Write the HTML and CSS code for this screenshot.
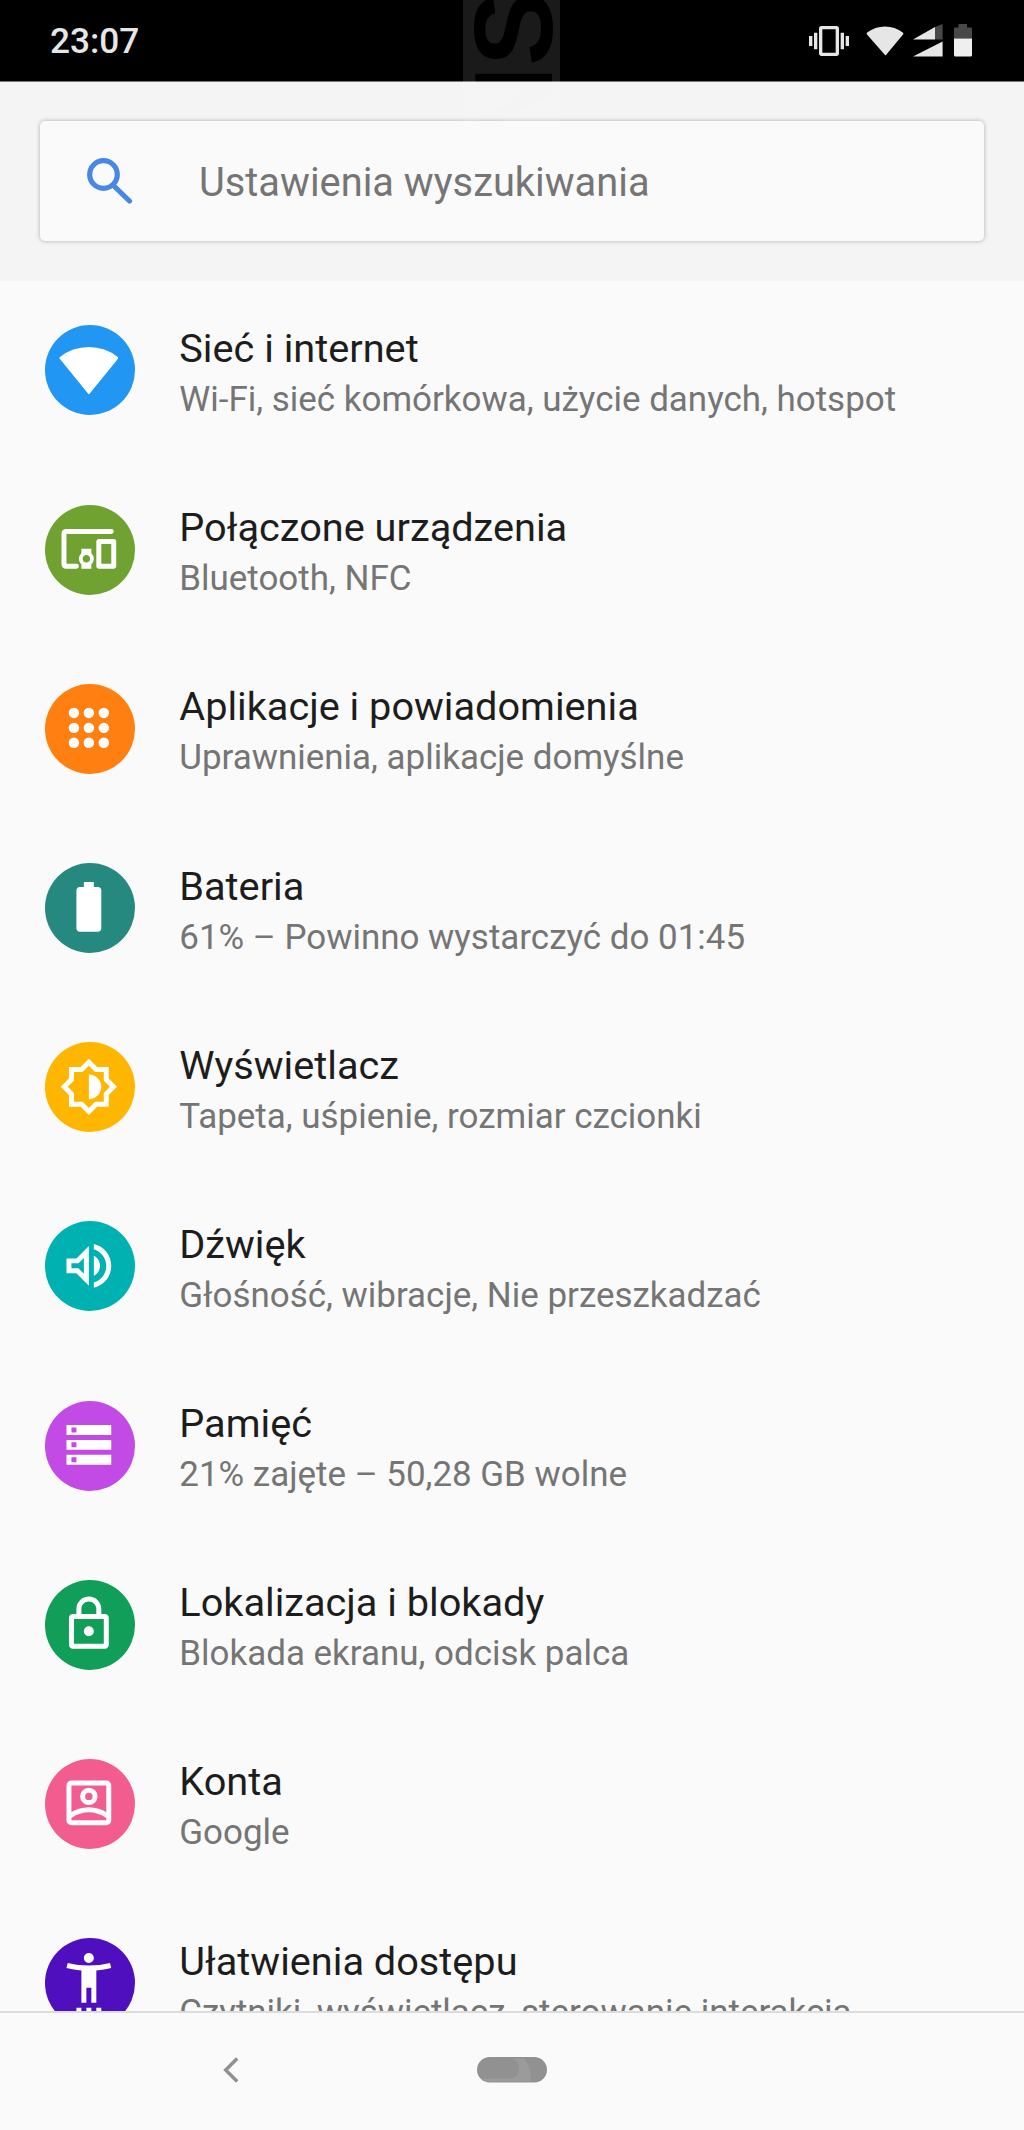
FILE: index.html
```html
<!DOCTYPE html>
<html lang="pl">
<head>
  <meta charset="UTF-8" />
  <meta name="viewport" content="width=device-width, initial-scale=1.0" />
  <title>Ustawienia</title>
  <link rel="stylesheet" href="styles.css">
</head>
<body>
  <header class="status-bar">
    <span class="clock">23:07</span>
    <div class="status-icons">
      <svg class="vibrate" viewBox="0 0 24 24"><path d="M0 15h2V9H0v6zm3 2h2V7H3v10zm19-8v6h2V9h-2zm-3 8h2V7h-2v10zM16.500 3h-9C6.670 3 6 3.670 6 4.500v15c0 .83.67 1.500 1.500 1.500h9c.83 0 1.500-.67 1.500-1.500v-15c0-.83-.67-1.500-1.500-1.500zM16 19H8V5h8v14z"/></svg>
      <svg class="wifi" viewBox="0 0 38 30"><path d="M19 29L1 8.500Q0 7.500 1.200 6.600Q9 .5 19 .5T36.800 6.600Q38 7.500 37 8.500L20 29Q19.500 29.600 19 29z"/></svg>
      <svg class="signal" viewBox="0 0 30 33"><path d="M0 15.500L22 3v12.500zM0 32.500L29.600 17.500v15z"/><path class="dim" d="M22 3L29.600 0v15.500H22z"/></svg>
      <svg class="battery" viewBox="0 0 18 33"><path class="dim" d="M4.500 0h8.500v3.500h4q1 0 1 1v10H0v-10q0-1 1-1h3.500z"/><path class="charge" d="M0 14.500h18V31q0 1.500-1.500 1.500h-15Q0 32.500 0 31z"/></svg>
    </div>
  </header>

  <svg class="watermark" viewBox="0 0 97 121">
    <mask id="letters">
      <rect width="97" height="121" fill="#fff"/>
      <text transform="translate(89 147) rotate(-90)">NS</text>
    </mask>
    <rect width="97" height="121" fill="#fff" opacity="0.1" mask="url(#letters)"/>
  </svg>

  <div class="search-panel">
    <div class="search-box">
      <svg class="search-icon" viewBox="0 0 46 46"><circle cx="16.500" cy="16.500" r="13.800"/><path d="M28.500 29.500L42.500 43"/></svg>
      <span>Ustawienia wyszukiwania</span>
    </div>
  </div>

  <main class="settings">
    <div class="item">
      <div class="icon network">
        <svg viewBox="0 0 24 24"><path stroke="#fff" stroke-width=".7" stroke-linejoin="round" d="M12 21.400L23.500 7.200C23 6.800 18.600 3.200 12 3.200S1 6.800.5 7.200z"/></svg>
      </div>
      <div class="text">
        <h2>Sieć i internet</h2>
        <p>Wi-Fi, sieć komórkowa, użycie danych, hotspot</p>
      </div>
    </div>
    <div class="item">
      <div class="icon devices">
        <svg viewBox="0 0 24 24"><path class="line" stroke-linecap="round" d="M21 5H3q-1 0-1 1v12q0 1 1 1h4"/><path d="M13 12H9v1.780c-.61.55-1 1.330-1 2.220s.39 1.670 1 2.220V20h4v-1.780c.61-.55 1-1.340 1-2.220s-.39-1.670-1-2.220V12zm-2 5.500c-.83 0-1.500-.67-1.500-1.500s.67-1.500 1.500-1.500 1.500.67 1.500 1.500-.67 1.500-1.500 1.500zM22 8h-6c-.5 0-1 .5-1 1v10c0 .5.5 1 1 1h6c.5 0 1-.5 1-1V9c0-.5-.5-1-1-1zm-1 10h-4v-8h4v8z"/></svg>
      </div>
      <div class="text">
        <h2>Połączone urządzenia</h2>
        <p>Bluetooth, NFC</p>
      </div>
    </div>
    <div class="item">
      <div class="icon apps">
        <svg viewBox="0 0 24 24"><circle cx="6" cy="6" r="2.100"/><circle cx="12" cy="6" r="2.100"/><circle cx="18" cy="6" r="2.100"/><circle cx="6" cy="12" r="2.100"/><circle cx="12" cy="12" r="2.100"/><circle cx="18" cy="12" r="2.100"/><circle cx="6" cy="18" r="2.100"/><circle cx="12" cy="18" r="2.100"/><circle cx="18" cy="18" r="2.100"/></svg>
      </div>
      <div class="text">
        <h2>Aplikacje i powiadomienia</h2>
        <p>Uprawnienia, aplikacje domyślne</p>
      </div>
    </div>
    <div class="item">
      <div class="icon power">
        <svg viewBox="0 0 24 24"><path d="M15.670 4H14V2h-4v2H8.330C7.600 4 7 4.600 7 5.330v15.330C7 21.400 7.600 22 8.330 22h7.330c.74 0 1.340-.6 1.340-1.330V5.330C17 4.600 16.400 4 15.670 4z"/></svg>
      </div>
      <div class="text">
        <h2>Bateria</h2>
        <p>61% – Powinno wystarczyć do 01:45</p>
      </div>
    </div>
    <div class="item">
      <div class="icon display">
        <svg viewBox="0 0 24 24"><path fill-rule="evenodd" d="M20 15.310L23.310 12 20 8.690V4h-4.690L12 .69 8.690 4H4v4.690L.69 12 4 15.310V20h4.690L12 23.310 15.310 20H20v-4.690zM18 14.480V18h-3.520L12 20.480 9.520 18H6v-3.520L3.520 12 6 9.520V6h3.520L12 3.520 14.480 6H18v3.520L20.480 12 18 14.480zM12 7v10c2.760 0 5-2.240 5-5s-2.240-5-5-5z"/></svg>
      </div>
      <div class="text">
        <h2>Wyświetlacz</h2>
        <p>Tapeta, uśpienie, rozmiar czcionki</p>
      </div>
    </div>
    <div class="item">
      <div class="icon sound">
        <svg viewBox="0 0 24 24"><path fill-rule="evenodd" d="M3 9v6h4l5 5V4L7 9H3zm7-.17v6.340L7.830 13H5v-2h2.830L10 8.830zM16.500 12c0-1.770-1.020-3.290-2.500-4.030v8.050c1.480-.73 2.500-2.250 2.500-4.020zM14 3.230v2.060c2.890.86 5 3.540 5 6.710s-2.110 5.850-5 6.710v2.060c4.010-.91 7-4.490 7-8.770s-2.990-7.860-7-8.770z"/></svg>
      </div>
      <div class="text">
        <h2>Dźwięk</h2>
        <p>Głośność, wibracje, Nie przeszkadzać</p>
      </div>
    </div>
    <div class="item">
      <div class="icon storage">
        <svg viewBox="0 0 24 24"><path fill-rule="evenodd" d="M3 4h18v4H3zM5 5v2h2V5zM3 10h18v4H3zM5 11v2h2v-2zM3 16h18v4H3zM5 17v2h2v-2z"/></svg>
      </div>
      <div class="text">
        <h2>Pamięć</h2>
        <p>21% zajęte – 50,28 GB wolne</p>
      </div>
    </div>
    <div class="item">
      <div class="icon security">
        <svg viewBox="0 0 24 24"><path fill-rule="evenodd" d="M18.500 8H17V6c0-2.760-2.240-5-5-5S7 3.240 7 6v2H5.500C4.700 8 4 8.700 4 9.500v11c0 .8.7 1.500 1.500 1.500h13c.8 0 1.500-.7 1.500-1.500v-11c0-.8-.7-1.500-1.500-1.500zM9 6c0-1.660 1.340-3 3-3s3 1.340 3 3v2H9V6zm9 14H6V10h12v10zm-6-3c1.100 0 2-.9 2-2s-.9-2-2-2-2 .9-2 2 .9 2 2 2z"/></svg>
      </div>
      <div class="text">
        <h2>Lokalizacja i blokady</h2>
        <p>Blokada ekranu, odcisk palca</p>
      </div>
    </div>
    <div class="item">
      <div class="icon accounts">
        <svg viewBox="0 0 24 24"><rect class="line" x="4" y="4" width="16" height="16" rx="1"/><circle class="line" cx="12" cy="9.400" r="2.500"/><path class="line" d="M4.500 17.200Q12 12.400 19.500 17.200"/></svg>
      </div>
      <div class="text">
        <h2>Konta</h2>
        <p>Google</p>
      </div>
    </div>
    <div class="item">
      <div class="icon accessibility">
        <svg viewBox="0 0 24 24"><path d="M20.500 4c-2.610.7-5.670 1-8.500 1s-5.890-.3-8.500-1L3 6c1.860.5 4 .83 6 1v13h2v-6h2v6h2V7c2-.17 4.140-.5 6-1zM12 4c1.100 0 2-.9 2-2s-.9-2-2-2-2 .9-2 2 .9 2 2 2zM7 22h2v2H7zM11 22h2v2h-2zM15 22h2v2h-2z"/></svg>
      </div>
      <div class="text">
        <h2>Ułatwienia dostępu</h2>
        <p>Czytniki, wyświetlacz, sterowanie interakcją</p>
      </div>
    </div>
  </main>

  <nav class="nav-bar">
    <svg class="back" viewBox="0 0 16 26"><path d="M14.200 1.500L2.700 13l11.500 11.500"/></svg>
    <svg class="home" viewBox="0 0 70 26"><rect width="70" height="25.500" rx="12.750"/><path d="M35 1.500h12c5 5 7 14 7 23H12q-5 0-8-3h26c9 0 12-3 12-10 0-5-2-9-7-10z"/></svg>
  </nav>
</body>
</html>
```

FILE: styles.css
```css
* {
  box-sizing: border-box;
}
body {
  font-family: Roboto, "Noto Sans", sans-serif;
  margin: 0;
  height: 2130px;
  display: flex;
  flex-direction: column;
  position: relative;
  overflow: hidden;
  background: #fafafa;
  color: #1d1d1d;
}
.status-bar {
  height: 82px;
  flex: none;
  background: #000;
  border-bottom: 1px solid #777;
  padding: 0 52px 0 50px;
  display: flex;
  justify-content: space-between;
  align-items: center;
}
.clock {
  padding-top: 2px;
  font-size: 35.200px;
  font-weight: 500;
  line-height: 41px;
  color: #e6e6e6;
}
.status-icons {
  display: flex;
  align-items: center;
  fill: #e6e6e6;
}
.status-icons .dim {
  fill: #484848;
}
.status-icons .charge {
  fill: #efefef;
}
.vibrate {
  width: 40px;
  height: 40px;
  margin-right: 17px;
}
.wifi {
  width: 38px;
  height: 30px;
  margin-right: 9px;
}
.signal {
  width: 30px;
  height: 33px;
  margin-right: 11px;
}
.battery {
  width: 18px;
  height: 33px;
}
.watermark {
  position: absolute;
  left: 463px;
  top: 0;
  width: 97px;
  height: 121px;
}
.watermark text {
  font-family: "Liberation Sans", sans-serif;
  font-weight: bold;
  font-size: 112px;
  fill: #000;
}
.search-panel {
  flex: none;
  height: 198.500px;
  padding: 39px 40px 0;
  background: #f4f4f4;
}
.search-box {
  height: 120px;
  padding-left: 47px;
  display: flex;
  align-items: center;
  background: #fafafa;
  border-radius: 5px;
  box-shadow: 0 0 4px rgba(0,0,0,0.3);
  color: #757575;
  font-size: 39.800px;
}
.search-box span {
  padding-top: 3px;
}
.search-icon {
  width: 46px;
  height: 46px;
  margin-right: 66px;
  fill: none;
  stroke: #4688e6;
  stroke-width: 5.200;
}
.search-icon path {
  stroke-linecap: round;
}
.settings {
  flex: 1;
  min-height: 0;
  overflow: hidden;
}
.item {
  height: 179.200px;
  padding: 44.900px 44.700px 0;
  display: flex;
}
.icon {
  width: 90px;
  height: 90px;
  margin-right: 44.600px;
  flex: none;
  border-radius: 50%;
  padding: 14.500px 0 0 14px;
}
.icon svg {
  display: block;
  width: 59.730px;
  height: 59.730px;
  fill: #fff;
}
.icon .line {
  fill: none;
  stroke: #fff;
  stroke-width: 2;
}
.network { background: #2196f3; }
.devices { background: #70a232; }
.apps { background: #ff8011; }
.power { background: #258980; }
.display { background: #ffb600; }
.sound { background: #00b1b1; }
.storage { background: #c24be6; }
.security { background: #109e58; }
.accounts { background: #f35c8f; }
.accessibility { background: #4f0fbe; }
.text {
  padding-top: 0.600px;
  white-space: nowrap;
}
.text h2 {
  margin: 0 0 6.500px;
  font-size: 39.700px;
  font-weight: 400;
  line-height: 46.500px;
}
.text p {
  margin: 0;
  font-size: 34.950px;
  line-height: 41px;
  color: #757575;
}
.nav-bar {
  flex: none;
  height: 119.500px;
  border-top: 2px solid #dcdcdc;
  padding: 0 223px 2px;
  display: flex;
  align-items: center;
}
.back {
  width: 16px;
  height: 26px;
  margin-right: 238px;
  fill: none;
  stroke: #919191;
  stroke-width: 3.500;
}
.home {
  width: 70px;
  height: 26px;
  fill: #919191;
}
.home path {
  fill: #9b9b9b;
}
```
